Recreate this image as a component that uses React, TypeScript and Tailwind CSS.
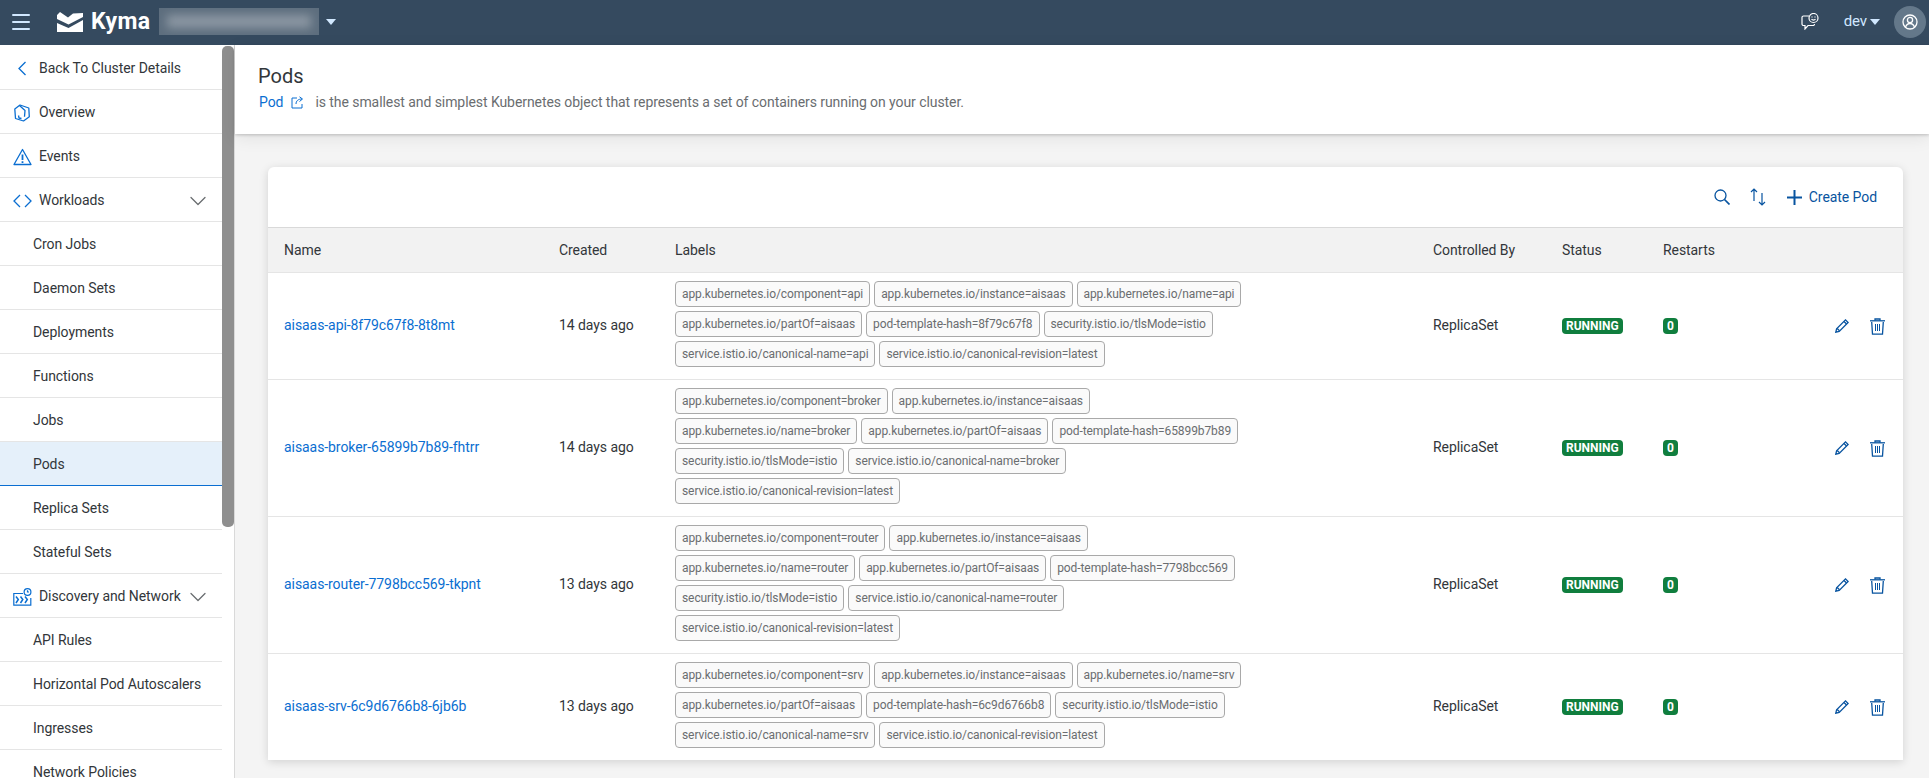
import { ChevronDown, Menu } from 'lucide-react';

const BLUE = '#0a6ed1';
const DARK_BLUE = '#0854a0';

const navItems = [
  { label: 'Back To Cluster Details', icon: 'back' },
  { label: 'Overview', icon: 'overview' },
  { label: 'Events', icon: 'events' },
  { label: 'Workloads', icon: 'workloads', expand: true },
  { label: 'Cron Jobs' },
  { label: 'Daemon Sets' },
  { label: 'Deployments' },
  { label: 'Functions' },
  { label: 'Jobs' },
  { label: 'Pods', active: true },
  { label: 'Replica Sets' },
  { label: 'Stateful Sets' },
  { label: 'Discovery and Network', icon: 'discovery', expand: true },
  { label: 'API Rules' },
  { label: 'Horizontal Pod Autoscalers' },
  { label: 'Ingresses' },
  { label: 'Network Policies' },
];

const pods = [
  {
    name: 'aisaas-api-8f79c67f8-8t8mt',
    created: '14 days ago',
    height: 'h-[107px]',
    labels: [
      'app.kubernetes.io/component=api',
      'app.kubernetes.io/instance=aisaas',
      'app.kubernetes.io/name=api',
      'app.kubernetes.io/partOf=aisaas',
      'pod-template-hash=8f79c67f8',
      'security.istio.io/tlsMode=istio',
      'service.istio.io/canonical-name=api',
      'service.istio.io/canonical-revision=latest',
    ],
  },
  {
    name: 'aisaas-broker-65899b7b89-fhtrr',
    created: '14 days ago',
    height: 'h-[137px]',
    labels: [
      'app.kubernetes.io/component=broker',
      'app.kubernetes.io/instance=aisaas',
      'app.kubernetes.io/name=broker',
      'app.kubernetes.io/partOf=aisaas',
      'pod-template-hash=65899b7b89',
      'security.istio.io/tlsMode=istio',
      'service.istio.io/canonical-name=broker',
      'service.istio.io/canonical-revision=latest',
    ],
  },
  {
    name: 'aisaas-router-7798bcc569-tkpnt',
    created: '13 days ago',
    height: 'h-[137px]',
    labels: [
      'app.kubernetes.io/component=router',
      'app.kubernetes.io/instance=aisaas',
      'app.kubernetes.io/name=router',
      'app.kubernetes.io/partOf=aisaas',
      'pod-template-hash=7798bcc569',
      'security.istio.io/tlsMode=istio',
      'service.istio.io/canonical-name=router',
      'service.istio.io/canonical-revision=latest',
    ],
  },
  {
    name: 'aisaas-srv-6c9d6766b8-6jb6b',
    created: '13 days ago',
    height: 'h-[106px]',
    labels: [
      'app.kubernetes.io/component=srv',
      'app.kubernetes.io/instance=aisaas',
      'app.kubernetes.io/name=srv',
      'app.kubernetes.io/partOf=aisaas',
      'pod-template-hash=6c9d6766b8',
      'security.istio.io/tlsMode=istio',
      'service.istio.io/canonical-name=srv',
      'service.istio.io/canonical-revision=latest',
    ],
  },
];

function NavIcon({ name }: { name?: string }) {
  if (name === 'back')
    return (
      <svg width="10" height="15" viewBox="0 0 10 15" fill="none" stroke={BLUE} strokeWidth="1.3">
        <path d="M8.500 1L2 7.500 8.500 14" />
      </svg>
    );
  if (name === 'overview')
    return (
      <svg width="18" height="18" viewBox="0 0 18 18" fill="none" stroke={BLUE} strokeWidth="1.3" strokeLinejoin="bevel">
        <path d="M7 1L15.800 4 16.300 12.800 10.500 17 2.500 14.500 1.800 5z" />
        <path d="M6.500 1.500L12 6.500 11.500 12.800M5.500 11.500l.5 2.500 2.500.5" />
      </svg>
    );
  if (name === 'events')
    return (
      <svg width="19" height="18" viewBox="0 0 19 18" fill="none" stroke={BLUE} strokeWidth="1.3">
        <path d="M9.500 1.500l8.500 15H1z" strokeLinejoin="round" />
        <path d="M9.500 6.500v5.500M9.500 13.200v1.800" strokeWidth="1.8" />
      </svg>
    );
  if (name === 'workloads')
    return (
      <svg width="19" height="16" viewBox="0 0 19 16" fill="none" stroke={BLUE} strokeWidth="1.3">
        <path d="M7 2L1 8l6 6M12 2l6 6-6 6" />
      </svg>
    );
  if (name === 'discovery')
    return (
      <svg width="19" height="18" viewBox="0 0 19 18" fill="none" stroke={BLUE} strokeWidth="1.2">
        <path d="M10 5.500H.8v11.700h17V10" />
        <path d="M3 8.500l2.300 3L3 15M7.500 8.500l2.300 3L7.500 15M12 8.500l2.300 3L12 15" strokeWidth="1.500" />
        <circle cx="14.500" cy="4" r="3.400" />
        <path d="M14.500 2.200V4h1.500" />
      </svg>
    );
  return null;
}

function Sidebar() {
  return (
    <aside className="relative w-[235px] shrink-0 h-[733px] overflow-hidden border-r border-[#d9d9d9] bg-white">
      <div className="w-[222px] pt-[1px]">
        {navItems.map((item) => (
          <div
            key={item.label}
            className={`flex items-center h-[44px] pt-[2px] border-b text-[14px] text-[#32363a] ${
              item.active ? 'bg-[#e5f0fa] border-[#0a6ed1]' : 'border-[#e5e5e5]'
            } ${item.icon ? 'pl-[9px]' : 'pl-[33px]'}`}
          >
            {item.icon && (
              <span className="w-[26px] mr-[4px] shrink-0 flex items-center justify-center">
                <NavIcon name={item.icon} />
              </span>
            )}
            <span className="whitespace-nowrap flex-1">{item.label}</span>
            {item.expand && <ChevronDown size={28} strokeWidth={1.1} className="mr-[10px] text-[#6a6d70]" />}
          </div>
        ))}
      </div>
      <div className="absolute left-[222px] top-[1px] w-[12px] h-[481px] rounded-[5px] bg-[#8f8f8f]" />
    </aside>
  );
}

function Chip({ text }: { text: string }) {
  return (
    <span className="h-[26px] flex items-center px-[6px] border border-[#a9a9a9] rounded-[4px] bg-[#fafafa] text-[12px] tracking-[-0.09px] text-[#6a6d70] whitespace-nowrap">
      {text}
    </span>
  );
}

function EditIcon() {
  return (
    <svg width="14" height="14" viewBox="0 0 14 14" fill="none" stroke={DARK_BLUE} strokeWidth="1.3">
      <path d="M.8 13.200l.8-3.400L10.500.9l2.600 2.600L4.200 12.400z" />
      <path d="M2.200 9.500l2.300 2.300M9 2.500l2.500 2.500" />
    </svg>
  );
}

function TrashIcon() {
  return (
    <svg width="15" height="17" viewBox="0 0 15 17" fill="none" stroke={DARK_BLUE} strokeWidth="1.3">
      <path d="M0 2.800h15" />
      <path d="M5 2.500V1h5v1.500" />
      <path d="M1.700 4l.8 12.200h10L13.300 4" />
      <path d="M5.500 6v7M7.500 6v7M9.500 6v7" strokeWidth="1" />
    </svg>
  );
}

export default function App() {
  return (
    <div className="w-[1929px] h-[778px] overflow-hidden bg-[#f4f4f4] font-['Roboto',sans-serif] tracking-[-0.07px]">
      <header className="h-[45px] pb-[2px] bg-[#354a5f] flex items-center text-white">
        <Menu size={24} strokeWidth={2} className="ml-[9px] text-[#d1e8ff]" />
        <svg width="26" height="20" viewBox="0 0 26 20" className="ml-[24px]" fill="white">
          <path d="M3 0l8 5.500 5-4 10-.5v4L11.500 12.500 0 7V3z" />
          <path d="M0 11l11.500 5L26 8v12H0z" />
        </svg>
        <span className="ml-[8px] w-[58px] text-[23px] font-bold leading-none tracking-[0.4px]">Kyma</span>
        <div className="relative ml-[10px] w-[160px] h-[27px] bg-[#5d6e7e] overflow-hidden">
          <div className="absolute inset-x-[8px] inset-y-[7px] bg-[#8c97a3] blur-[5px]" />
        </div>
        <span className="ml-[7px] w-0 h-0 border-x-[5px] border-x-transparent border-t-[6px] border-t-[#d1e8ff]" />
        <div className="ml-auto flex items-center">
          <svg width="18" height="17" viewBox="0 0 18 17" fill="none" stroke="white" strokeWidth="1.2">
            <path d="M8 3H2.500A1.500 1.500 0 0 0 1 4.500V11a1.500 1.500 0 0 0 1.500 1.500H4V16l3-3.500h5A1.500 1.500 0 0 0 13.500 11" />
            <circle cx="12.500" cy="5" r="4.500" />
            <path d="M10.500 6.200c1 1.200 3 1.200 4 0M11 3.500v1M14 3.500v1" />
          </svg>
          <span className="ml-[25px] text-[15px] text-[#d1e8ff]">dev</span>
          <span className="ml-[3px] w-0 h-0 border-x-[5px] border-x-transparent border-t-[6px] border-t-[#d1e8ff]" />
          <div className="ml-[14px] mr-[3px] w-[32px] h-[32px] rounded-full bg-[#64788a] flex items-center justify-center">
            <svg width="16" height="16" viewBox="0 0 16 16" fill="none" stroke="white" strokeWidth="1.3">
              <circle cx="8" cy="8" r="7" />
              <circle cx="8" cy="6" r="2.600" />
              <path d="M3.500 13c1-2.500 2.500-3.500 4.500-3.500s3.500 1 4.500 3.500" />
            </svg>
          </div>
        </div>
      </header>

      <div className="flex">
        <Sidebar />
        <main className="flex-1 min-w-0">
          <div className="relative h-[89px] bg-white pl-[23px] pt-[18px] shadow-[0_1px_3px_rgba(0,0,0,0.2),0_4px_16px_rgba(0,0,0,0.08)]">
            <h1 className="text-[20px] leading-[26px] text-[#32363a] tracking-normal">Pods</h1>
            <p className="flex items-center text-[14px] leading-[20px] text-[#6a6d70] mt-[3px]">
              <span className="text-[#0a6ed1] ml-[1px]">Pod</span>
              <svg width="13" height="13" viewBox="0 0 13 13" fill="none" stroke={BLUE} strokeWidth="1" className="ml-[8px] mr-[11px]">
                <path d="M6 2H1v10h10V8M5 8c0-3 2-5 6-5M8.500.8L11.500 3 8.500 5.500" />
              </svg>
              is the smallest and simplest Kubernetes object that represents a set of containers running on your cluster.
            </p>
          </div>

          <section className="ml-[33px] mr-[26px] mt-[33px] rounded-t-[6px] bg-white shadow-[0_2px_10px_rgba(0,0,0,0.14)]">
            <div className="h-[61px] flex items-center justify-end pr-[26px] border-b border-[#d9d9d9] text-[#0854a0]">
              <svg width="16" height="16" viewBox="0 0 16 16" fill="none" stroke={DARK_BLUE} strokeWidth="1.3">
                <circle cx="6.500" cy="6.500" r="5.500" />
                <path d="M10.500 10.500l5 5" strokeWidth="1.700" />
              </svg>
              <svg width="18" height="18" viewBox="0 0 18 18" fill="none" stroke={DARK_BLUE} strokeWidth="1.2" className="ml-[19px]">
                <path d="M5 13V1M2 4l3-3 3 3M13 5v12M10 14l3 3 3-3" />
              </svg>
              <svg width="15" height="15" viewBox="0 0 15 15" fill="none" stroke={DARK_BLUE} strokeWidth="2" className="ml-[20px]">
                <path d="M7.500 0v15M0 7.500h15" />
              </svg>
              <span className="ml-[7px] text-[14px]">Create Pod</span>
            </div>

            <div className="grid grid-cols-[291px_116px_758px_129px_101px_1fr] items-center h-[45px] bg-[#f2f2f2] border-b border-[#e5e5e5] text-[14px] text-[#32363a]">
              <span className="pl-[16px]">Name</span>
              <span>Created</span>
              <span>Labels</span>
              <span>Controlled By</span>
              <span>Status</span>
              <span>Restarts</span>
            </div>

            {pods.map((pod, i) => (
              <div
                key={pod.name}
                className={`grid grid-cols-[291px_116px_758px_129px_101px_1fr] items-center pb-[2px] ${pod.height} ${
                  i < pods.length - 1 ? 'border-b border-[#e5e5e5]' : ''
                } text-[14px] text-[#32363a]`}
              >
                <span className="pl-[16px] text-[#0a6ed1]">{pod.name}</span>
                <span>{pod.created}</span>
                <div className="flex flex-wrap gap-[4px] max-w-[585px] mb-[2px]">
                  {pod.labels.map((label) => (
                    <Chip key={label} text={label} />
                  ))}
                </div>
                <span>ReplicaSet</span>
                <span className="w-fit h-[16px] mt-[2px] px-[4px] flex items-center rounded-[4px] bg-[#107e3e] text-white text-[12px] font-bold tracking-normal">
                  RUNNING
                </span>
                <div className="flex items-center mt-[2px]">
                  <span className="w-[15px] h-[16px] flex items-center justify-center rounded-[4px] bg-[#107e3e] text-white text-[12px] font-bold">
                    0
                  </span>
                  <span className="ml-auto mr-[21px]"><EditIcon /></span>
                  <span className="mr-[18px]"><TrashIcon /></span>
                </div>
              </div>
            ))}
          </section>
        </main>
      </div>
    </div>
  );
}
